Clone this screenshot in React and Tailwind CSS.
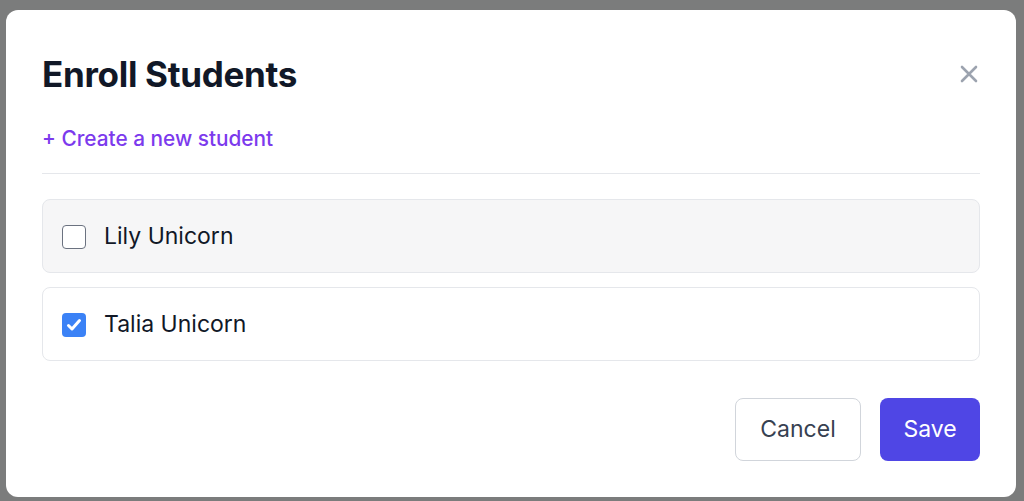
import React, { useState } from "react";

export default function App() {
  const [checked, setChecked] = useState({ lily: false, talia: true });
  const students = [
    { id: "lily", name: "Lily Unicorn", bg: "bg-[#f6f6f7]" },
    { id: "talia", name: "Talia Unicorn", bg: "bg-white" },
  ];
  return (
    <div
      className="w-[1024px] h-[501px] bg-[#7b7c7c] pt-[10px] pl-[6px] overflow-hidden"
      style={{ fontFamily: "Inter, 'Noto Sans', sans-serif" }}
    >
      <div className="w-[1010px] h-[487px] bg-white rounded-[12px] px-[36px] pt-[36px] flex flex-col">
        <div className="flex items-center justify-between h-[56px]">
          <h1 className="text-[35px] leading-[56px] font-bold text-[#111827] tracking-[-0.3px]">
            Enroll Students
          </h1>
          <button className="w-[24px] h-[24px] flex items-center justify-center text-[#9ca3af] mr-[-1px]">
            <svg width="20" height="20" viewBox="0 0 20 20" fill="none" stroke="currentColor" strokeWidth="2.6" strokeLinecap="round">
              <path d="M3 3L17 17M17 3L3 17" />
            </svg>
          </button>
        </div>
        <div className="mt-[23px] text-[20.8px] leading-[28px] font-medium text-[#7c3aed]">
          + Create a new student
        </div>
        <div className="mt-[20px] h-px bg-[#e5e7eb]" />
        <div className="mt-[25px] flex flex-col gap-[14px]">
          {students.map((s) => (
            <label
              key={s.id}
              className={`h-[74px] flex items-center gap-[18px] px-[19px] pt-[1px] border border-[#e5e7eb] rounded-[8px] ${s.bg}`}
            >
              <span
                onClick={() => setChecked({ ...checked, [s.id]: !checked[s.id] })}
                className={
                  checked[s.id]
                    ? "w-[24px] h-[24px] rounded-[4px] bg-[#3b82f6] flex items-center justify-center"
                    : "w-[24px] h-[24px] rounded-[4px] border-[1.5px] border-[#6b7280] bg-white"
                }
              >
                {checked[s.id] && (
                  <svg width="18" height="18" viewBox="0 0 18 18" fill="none" stroke="white" strokeWidth="3" strokeLinecap="round" strokeLinejoin="round">
                    <path d="M3.5 9.5L7 13L14.5 4.5" />
                  </svg>
                )}
              </span>
              <span className="text-[23px] text-[#111827]">{s.name}</span>
            </label>
          ))}
        </div>
        <div className="mt-[37px] flex justify-end gap-[19px]">
          <button className="w-[126px] h-[63px] rounded-[8px] border border-[#d1d5db] bg-white text-[23px] text-[#374151]">
            Cancel
          </button>
          <button className="w-[100px] h-[63px] rounded-[8px] bg-[#4f46e5] text-[23px] text-white">
            Save
          </button>
        </div>
      </div>
    </div>
  );
}
